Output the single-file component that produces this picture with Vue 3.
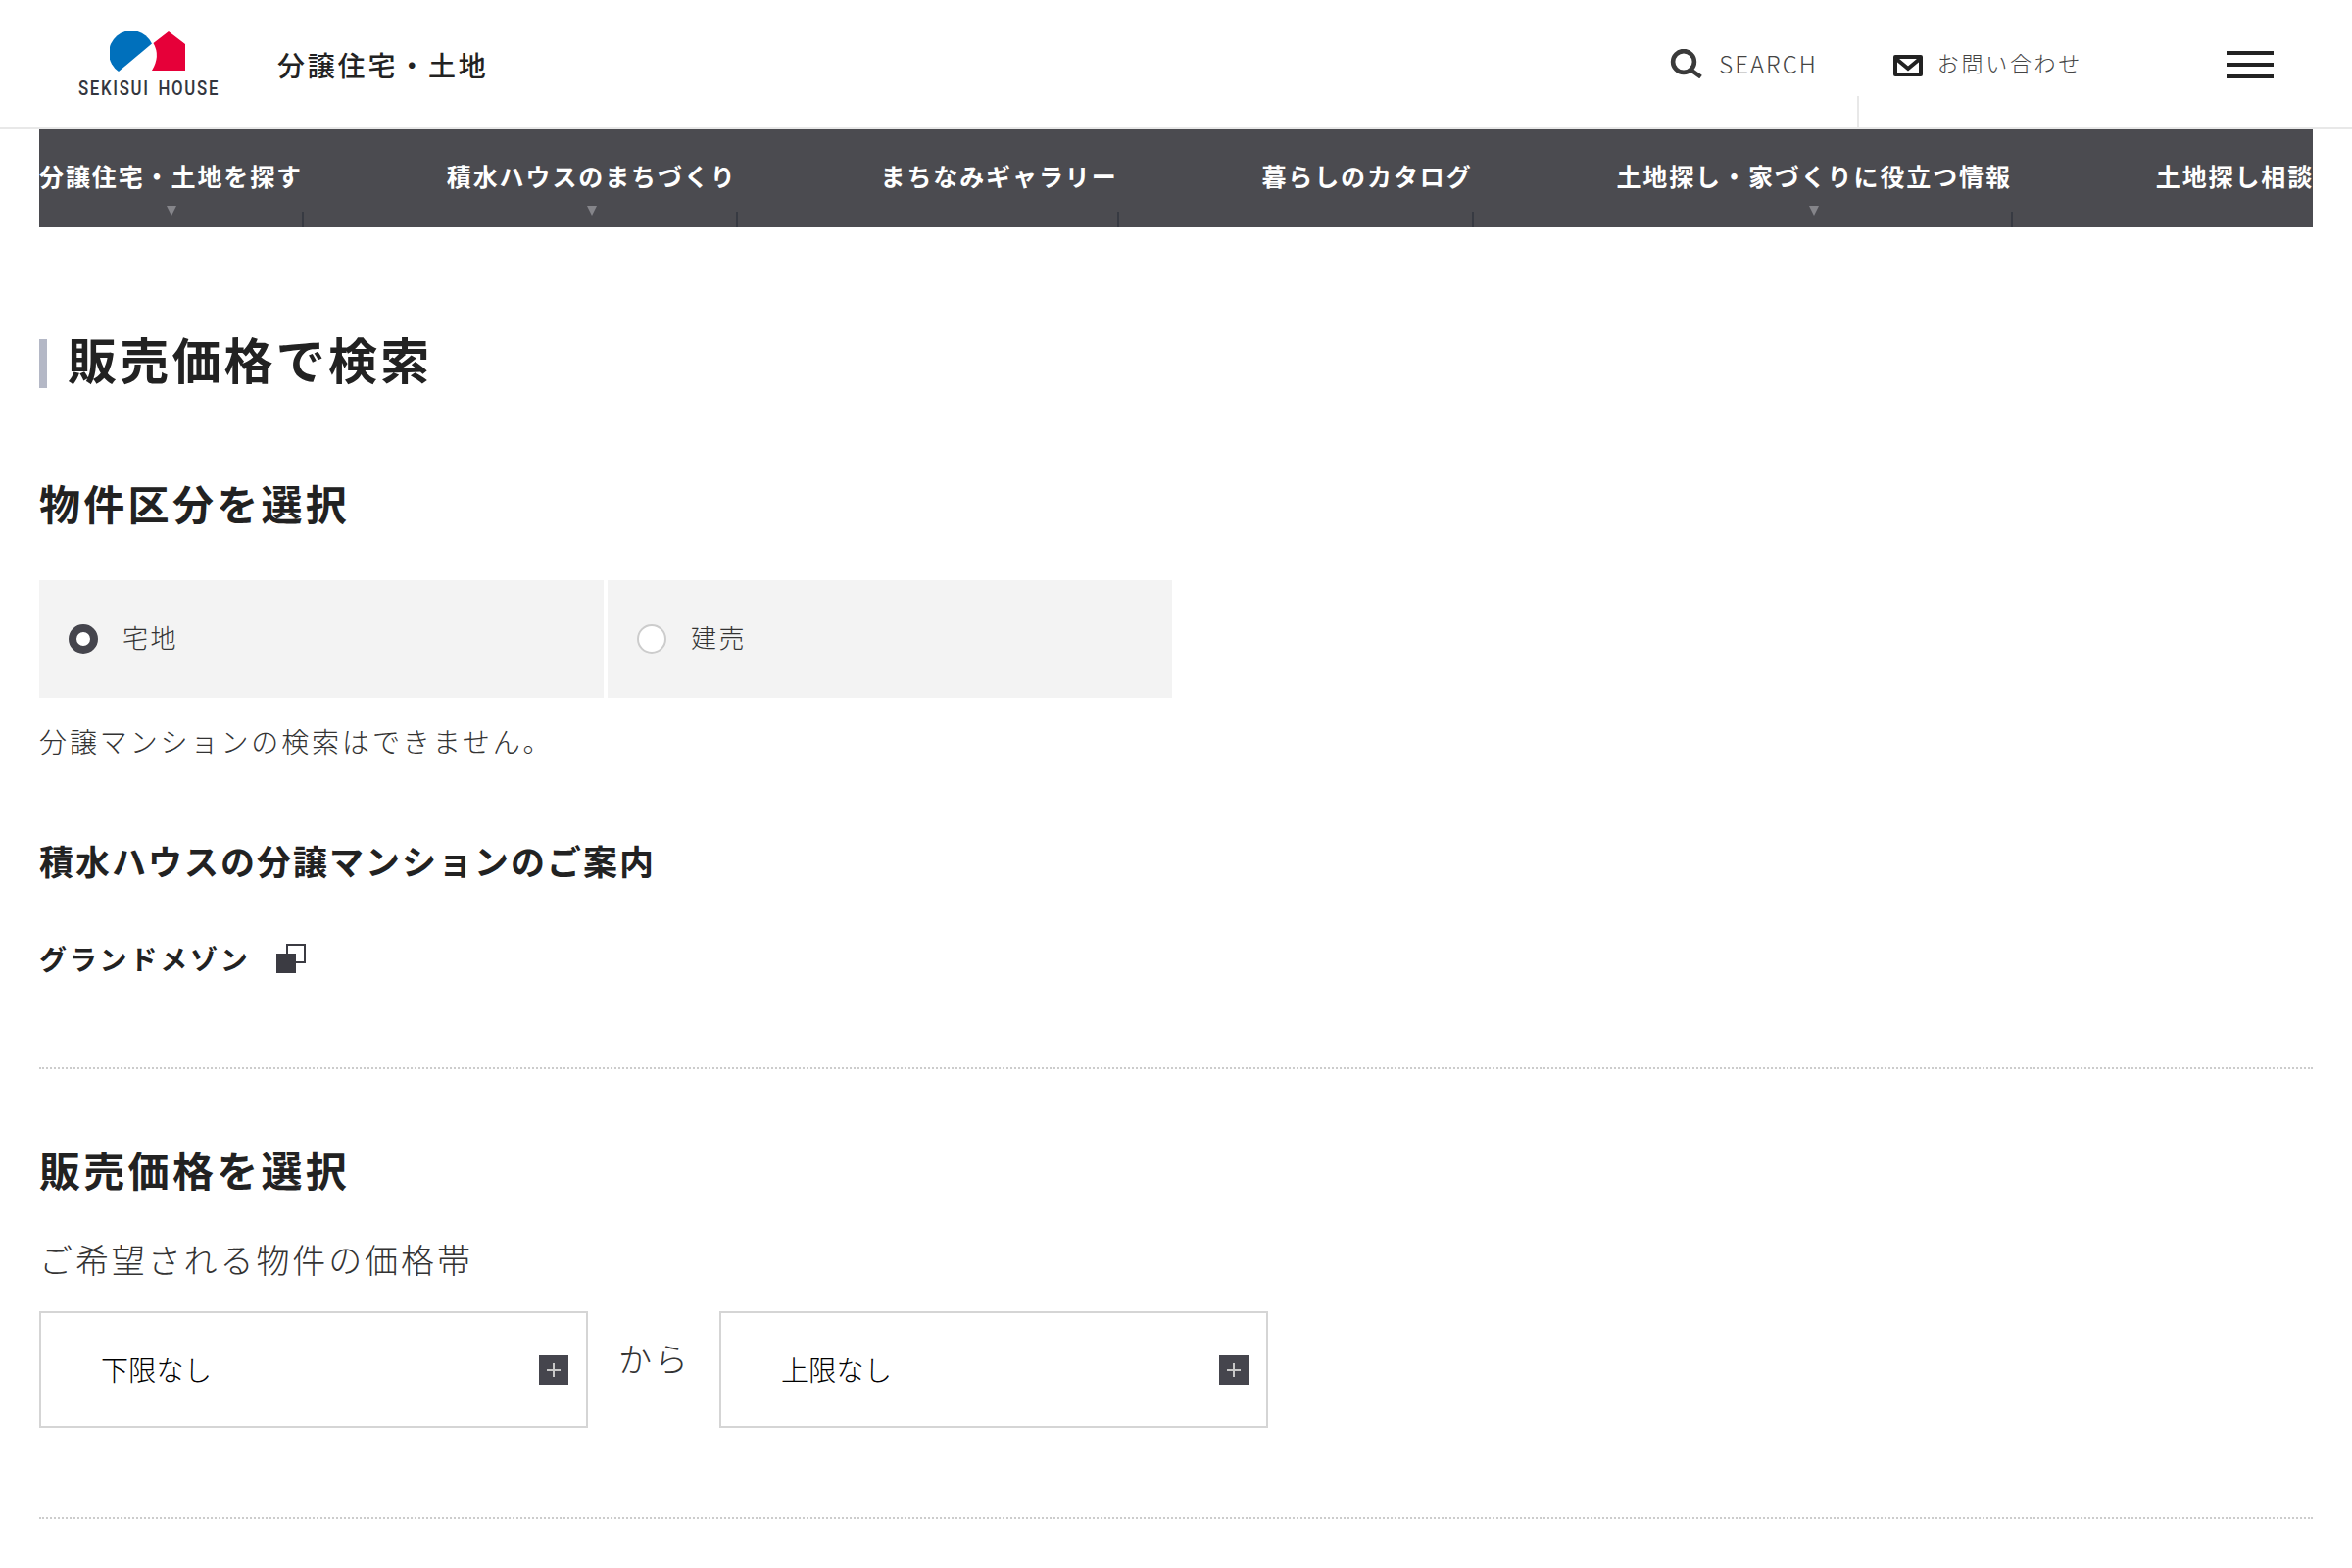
<script setup>
const navItems = [
  { label: '分譲住宅・土地を探す', sub: true },
  { label: '積水ハウスのまちづくり', sub: true },
  { label: 'まちなみギャラリー', sub: false },
  { label: '暮らしのカタログ', sub: false },
  { label: '土地探し・家づくりに役立つ情報', sub: true },
  { label: '土地探し相談', sub: false, last: true }
]
</script>

<template>
  <div class="page">
    <header class="header">
      <div class="brand">
        <div class="logo">
          <svg class="mark" viewBox="0 0 80 42" width="80" height="42">
            <path d="M43 12.5 A23 23 0 1 0 9 41 Z" fill="#0070bc" />
            <path d="M60 0 L77 13 V40 H43 Q52 25 44.5 12 Z" fill="#e60039" />
          </svg>
          <span class="logo-text">SEKISUI HOUSE</span>
        </div>
        <span class="site-name">分譲住宅・土地</span>
      </div>
      <div class="tools">
        <div class="search">
          <svg viewBox="0 0 33 30" width="33" height="30">
            <circle cx="14" cy="13" r="10.9" fill="none" stroke="#3a3a3a" stroke-width="4.6" />
            <path d="M21 21 L31.5 28.5" stroke="#3a3a3a" stroke-width="4.4" />
          </svg>
          <span>SEARCH</span>
        </div>
        <div class="contact">
          <svg viewBox="0 0 30 22" width="30" height="22">
            <rect width="30" height="22" rx="2" fill="#222" />
            <rect x="4" y="4" width="22" height="14" fill="#fff" />
            <path d="M3 4 L15 14 L27 4" fill="none" stroke="#222" stroke-width="4" />
          </svg>
          <span>お問い合わせ</span>
          <i class="contact-rule"></i>
        </div>
        <div class="burger"><i></i><i></i><i></i></div>
      </div>
    </header>

    <nav class="nav">
      <div v-for="item in navItems" :key="item.label" class="nav-item" :class="{ last: item.last }">
        <span>{{ item.label }}</span>
        <i v-if="item.sub" class="nav-arrow"></i>
      </div>
    </nav>

    <main class="main">
      <h1 class="title">販売価格で検索</h1>

      <h2 class="section first">物件区分を選択</h2>
      <div class="radios">
        <div class="radio"><i class="dot on"></i><span>宅地</span></div>
        <div class="radio"><i class="dot"></i><span>建売</span></div>
      </div>
      <p class="note">分譲マンションの検索はできません。</p>
      <h3 class="sub">積水ハウスの分譲マンションのご案内</h3>
      <div class="link">
        <span>グランドメゾン</span>
        <i class="ext"><b></b><em></em></i>
      </div>
      <div class="rule one"></div>

      <h2 class="section price">販売価格を選択</h2>
      <p class="lead">ご希望される物件の価格帯</p>
      <div class="range">
        <div class="select"><span>下限なし</span><i class="plus"></i></div>
        <span class="kara">から</span>
        <div class="select"><span>上限なし</span><i class="plus"></i></div>
      </div>
      <div class="rule two"></div>
    </main>
  </div>
</template>

<style>
body { margin: 0; background: #fff; }
</style>

<style scoped>
.page {
  width: 2400px;
  height: 1600px;
  overflow: hidden;
  background: #fff;
  color: #222;
  font-family: "Noto Sans CJK JP", "Noto Sans", sans-serif;
}
.header {
  height: 130px;
  border-bottom: 2px solid #e8e8e8;
  display: flex;
  justify-content: space-between;
}
.brand { display: flex; padding-left: 80px; }
.logo { width: 142px; padding-top: 32px; display: flex; flex-direction: column; position: relative; }
.mark { margin-left: 32px; display: block; }
.logo-text {
  margin-top: 4px;
  font-family: "Roboto", sans-serif;
  font-weight: 500;
  font-size: 20px;
  line-height: 24px;
  letter-spacing: 2px;
  word-spacing: 3.5px;
  white-space: nowrap;
  color: #33363e;
  transform: scaleX(0.84);
  transform-origin: left center;
}
.site-name {
  margin: 46px 0 0 61px;
  font-size: 28px;
  line-height: 40px;
  letter-spacing: 2.8px;
  font-weight: 500;
}
.tools { display: flex; align-items: flex-start; padding-right: 80px; }
.search { display: flex; align-items: center; margin-top: 50px; gap: 17px; font-size: 24px; line-height: 30px; color: #444; font-weight: 200; letter-spacing: 2px; }
.contact { position: relative; display: flex; align-items: center; margin: 56px 0 0 77px; gap: 15px; font-size: 22px; line-height: 22px; letter-spacing: 2.7px; font-weight: 200; color: #444; }
.contact span { position: relative; top: -4px; }
.contact-rule { position: absolute; left: -37px; top: 42px; width: 2px; height: 32px; background: #e8e8e8; }
.burger { margin: 52px 0 0 147px; width: 48px; display: flex; flex-direction: column; gap: 8px; }
.burger i { display: block; height: 4px; background: #222; }

.nav {
  margin: 0 40px;
  height: 100px;
  background: #4b4b50;
  display: flex;
  overflow: hidden;
  color: #fff;
  font-size: 25px;
  font-weight: 700;
  letter-spacing: 1.9px;
}
.nav-item {
  position: relative;
  flex: none;
  padding: 29px 0 0;
  margin-right: 146.8px;
  line-height: 36px;
  white-space: nowrap;
}
.nav-item::after {
  content: "";
  position: absolute;
  right: -1px;
  bottom: 0;
  width: 2px;
  height: 16px;
  background: #373a42;
}
.nav-item.last::after { display: none; }
.nav-arrow {
  position: absolute;
  left: 50%;
  top: 78px;
  margin-left: -5px;
  border-left: 5px solid transparent;
  border-right: 5px solid transparent;
  border-top: 10px solid #85858a;
}

.main { padding: 0 40px; }
.title {
  margin: 114px 0 0;
  padding: 0 0 12px 21px;
  border-left: 8px solid #b4b8c6;
  font-size: 50px;
  line-height: 38px;
  letter-spacing: 3.2px;
  font-weight: 700;
}
.section {
  margin: 0;
  font-size: 42px;
  line-height: 60px;
  letter-spacing: 3.3px;
  font-weight: 700;
}
.section.first { margin-top: 87px; }
.radios { display: flex; gap: 4px; margin-top: 49px; }
.radio {
  width: 576px;
  height: 120px;
  box-sizing: border-box;
  padding-left: 30px;
  background: #f3f3f3;
  display: flex;
  align-items: center;
  gap: 25px;
  font-size: 26px;
  font-weight: 200;
  letter-spacing: 2.4px;
  color: #333;
}
.radio span { position: relative; top: -3px; }
.dot { width: 30px; height: 30px; box-sizing: border-box; border-radius: 50%; border: 2px solid #ccc; background: #fff; }
.dot.on { border: 8px solid #45454d; }
.note {
  margin: 24px 0 0;
  font-size: 28px;
  line-height: 40px;
  letter-spacing: 2.9px;
  font-weight: 200;
  color: #333;
}
.sub {
  margin: 77px 0 0;
  font-size: 35px;
  line-height: 50px;
  letter-spacing: 2px;
  font-weight: 700;
}
.link {
  margin-top: 55px;
  display: flex;
  align-items: center;
  gap: 26px;
  font-size: 28px;
  line-height: 40px;
  letter-spacing: 2.8px;
  font-weight: 700;
}
.ext { position: relative; display: block; width: 30px; height: 30px; }
.ext b { position: absolute; right: 0; top: 0; width: 20px; height: 20px; box-sizing: border-box; border: 2px solid #3b3b42; }
.ext em { position: absolute; left: 0; bottom: 0; width: 20px; height: 20px; background: #3b3b42; }
.rule { border-top: 2px dotted #ccc; }
.rule.one { margin-top: 91px; }
.section.price { margin-top: 72px; }
.lead {
  margin: 37px 0 0;
  font-size: 34px;
  line-height: 50px;
  letter-spacing: 2.9px;
  font-weight: 200;
  color: #333;
}
.range { display: flex; margin-top: 28px; }
.select {
  width: 560px;
  height: 119px;
  box-sizing: border-box;
  border: 2px solid #d5d5d5;
  padding: 0 18px 0 61px;
  display: flex;
  align-items: center;
  justify-content: space-between;
  font-size: 28px;
  letter-spacing: 0.3px;
  font-weight: 300;
  color: #000;
}
.select span { position: relative; top: -1px; }
.plus {
  position: relative;
  width: 30px;
  height: 30px;
  background: #45454d;
}
.plus::before, .plus::after { content: ""; position: absolute; background: #c8c8c8; }
.plus::before { left: 8px; right: 8px; top: 14px; height: 2px; }
.plus::after { top: 8px; bottom: 8px; left: 14px; width: 2px; }
.kara {
  width: 134px;
  box-sizing: border-box;
  padding-left: 2px;
  text-align: center;
  font-size: 34px;
  line-height: 95px;
  letter-spacing: 3px;
  font-weight: 200;
  color: #333;
}
.rule.two { margin-top: 91px; }
</style>
